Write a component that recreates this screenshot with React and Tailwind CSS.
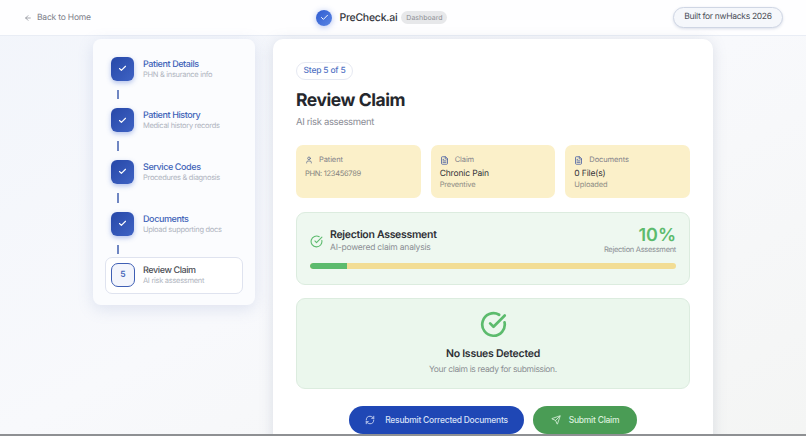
import React from "react";
import { ArrowLeft, Check, CircleCheckBig, FileText, RefreshCw, Send, User } from "lucide-react";

const steps = [
  { title: "Patient Details", sub: "PHN & insurance info" },
  { title: "Patient History", sub: "Medical history records" },
  { title: "Service Codes", sub: "Procedures & diagnosis" },
  { title: "Documents", sub: "Upload supporting docs" },
];

function DoneStep({ step }) {
  return (
    <>
      <div className="flex h-[37px] items-center gap-[9px] px-[6px]">
        <div className="flex h-[24px] w-[23px] shrink-0 items-center justify-center rounded-[6px] bg-gradient-to-br from-[#2748a8] to-[#3f63c4] shadow-[0_2px_5px_rgba(50,90,200,0.35)]">
          <Check className="h-[9px] w-[9px] text-white" strokeWidth={3} />
        </div>
        <div className="min-w-0 pt-[1px]">
          <div className="text-[9px] leading-[11px] font-medium tracking-[-0.4px] text-[#4163b8]">{step.title}</div>
          <div className="text-[7.5px] leading-[10px] tracking-[-0.3px] whitespace-nowrap text-[#b0b5c0]">{step.sub}</div>
        </div>
      </div>
      <div className="my-[2.5px] ml-[12px] h-[9.7px] w-[1.5px] bg-[#6f86c2]" />
    </>
  );
}

function InfoCard({ icon, label, title, sub, phn }) {
  return (
    <div className="h-[53px] flex-1 rounded-[7px] bg-[#fbf0c9] px-[9px] pt-[10px]">
      <div className="flex items-center gap-[6px] text-[7.5px] leading-[10px] tracking-[-0.1px] text-[#83828a]">
        {icon}
        {label}
      </div>
      {phn ? (
        <div className="mt-[4px] text-[7.5px] leading-[10px] tracking-[-0.3px] text-[#85847f]">{phn}</div>
      ) : (
        <>
          <div className="mt-[3px] text-[8.5px] leading-[12px] font-normal tracking-[-0.15px] text-[#34343a]">{title}</div>
          <div className="text-[7.5px] leading-[10px] tracking-[-0.15px] text-[#8f8e86]">{sub}</div>
        </>
      )}
    </div>
  );
}

export default function App() {
  return (
    <div className="relative flex h-[436px] w-[806px] flex-col overflow-hidden bg-gradient-to-br from-[#f2f5fb] via-[#f8f9fc] to-[#f4f5f4] font-['Inter','Liberation_Sans',sans-serif] [text-rendering:geometricPrecision]">
      {/* top bar */}
      <header className="flex h-[36px] shrink-0 items-center justify-between border-b border-[#e9edf5] bg-white/90 pr-[23px] pl-[24px]">
        <div className="flex items-center gap-[5px] pt-[1px] text-[8.5px] tracking-[-0.2px] text-[#7d808a]">
          <ArrowLeft className="h-[8px] w-[8px]" />
          Back to Home
        </div>
        <div className="flex items-center gap-[7px]">
          <div className="flex h-[16px] w-[16px] items-center justify-center rounded-full bg-gradient-to-br from-[#2f5bd0] to-[#5a85e4] shadow-[0_1px_6px_rgba(60,100,220,0.4)]">
            <Check className="h-[9px] w-[9px] text-white" strokeWidth={2.5} />
          </div>
          <div className="text-[10.5px] font-medium tracking-[-0.25px] text-[#33353c]">PreCheck.ai</div>
          <div className="-ml-[3px] rounded-full bg-[#e7e8ea] px-[5px] py-[2px] text-[7px] leading-[9px] text-[#8d8f94]">Dashboard</div>
        </div>
        <div className="flex h-[21px] w-[110px] items-center justify-center rounded-full border border-[#cfd6e4] bg-[#f5f7fb] text-[8.5px] tracking-[-0.3px] text-[#4c4f59] shadow-[0_1px_3px_rgba(80,100,150,0.2)]">
          Built for nwHacks 2026
        </div>
      </header>

      <div className="flex flex-1 justify-center gap-[18px] pt-[3px]">
        {/* steps */}
        <aside className="h-[266px] w-[162px] shrink-0 rounded-[8px] bg-[#fbfcfe] px-[12px] pt-[11px] shadow-[0_4px_16px_rgba(120,140,190,0.2)]">
          {steps.map((step) => (
            <DoneStep key={step.title} step={step} />
          ))}
          <div className="flex h-[37px] items-center gap-[8px] rounded-[7px] border border-[#dfe3ef] bg-white px-[5px]">
            <div className="flex h-[24px] w-[24px] shrink-0 items-center justify-center rounded-[7px] border-[1.5px] border-[#3f5fb4] bg-[#f3f5fc] text-[8.5px] font-semibold text-[#4566b8]">
              5
            </div>
            <div className="pt-[1px]">
              <div className="text-[9px] leading-[11px] font-medium tracking-[-0.4px] text-[#4b4d55]">Review Claim</div>
              <div className="text-[7.5px] leading-[10px] tracking-[-0.3px] text-[#b0b5c0]">AI risk assessment</div>
            </div>
          </div>
        </aside>

        {/* main card */}
        <main className="h-[420px] w-[440px] shrink-0 rounded-[10px] bg-white px-[23px] pt-[23px] shadow-[0_2px_14px_rgba(120,130,160,0.22)]">
          <div className="flex h-[18px] w-[57px] items-center justify-center rounded-full border border-[#e6e9f2] text-[8.5px] font-medium tracking-[-0.2px] text-[#5273c4]">
            Step 5 of 5
          </div>
          <h1 className="mt-[10px] text-[17.5px] leading-[22px] font-bold tracking-[-0.45px] text-[#25272d]">Review Claim</h1>
          <p className="mt-[4px] text-[9.5px] leading-[13px] tracking-[-0.35px] text-[#8b8d95]">AI risk assessment</p>

          <div className="mt-[16px] flex gap-[10px]">
            <InfoCard icon={<User className="h-[8px] w-[8px] text-[#4c5f8c]" />} label="Patient" phn="PHN: 123456789" />
            <InfoCard icon={<FileText className="h-[9px] w-[9px] text-[#3d55a0]" />} label="Claim" title="Chronic Pain" sub="Preventive" />
            <InfoCard icon={<FileText className="h-[9px] w-[9px] text-[#3d55a0]" />} label="Documents" title="0 File(s)" sub="Uploaded" />
          </div>

          <section className="mt-[14px] h-[73px] rounded-[9px] border border-[#dcecdf] bg-[#eef8f0] px-[13px] pt-[15px]">
            <div className="flex items-start justify-between">
              <div className="flex items-center gap-[7px]">
                <CircleCheckBig className="h-[13px] w-[13px] text-[#5cbb6d]" />
                <div>
                  <div className="text-[10.5px] leading-[14px] font-semibold tracking-[-0.3px] text-[#2e3036]">Rejection Assessment</div>
                  <div className="text-[8.5px] leading-[13px] tracking-[-0.2px] text-[#8b8f94]">AI-powered claim analysis</div>
                </div>
              </div>
              <div className="-mt-[1px] text-right">
                <div className="text-[18px] leading-[17px] font-semibold text-[#5cbb6d]">10%</div>
                <div className="text-[7.5px] leading-[12px] tracking-[-0.3px] text-[#8b8f94]">Rejection Assessment</div>
              </div>
            </div>
            <div className="mt-[7px] h-[6px] overflow-hidden rounded-full bg-[#f2dd94]">
              <div className="h-full w-[10%] rounded-l-full bg-[#5cbb6d]" />
            </div>
          </section>

          <section className="mt-[13px] flex h-[91px] flex-col items-center rounded-[9px] border border-[#dcecdf] bg-[#ebf7ed] pt-[12px]">
            <CircleCheckBig className="h-[27px] w-[27px] text-[#5cbb6d]" strokeWidth={2.4} />
            <div className="mt-[9px] text-[10.5px] leading-[14px] font-semibold tracking-[-0.25px] text-[#2e3036]">No Issues Detected</div>
            <div className="mt-[4px] text-[8.5px] leading-[11px] tracking-[-0.35px] text-[#8b8f94]">Your claim is ready for submission.</div>
          </section>

          <div className="mt-[17px] flex justify-center gap-[9px]">
            <button className="flex h-[28px] w-[175px] items-center justify-center gap-[10px] rounded-full bg-[#1f47b5] text-[8.5px] font-medium tracking-[-0.25px] text-[#d7e0f7]">
              <RefreshCw className="h-[10px] w-[10px]" />
              Resubmit Corrected Documents
            </button>
            <button className="flex h-[28px] w-[104px] items-center justify-center gap-[8px] rounded-full bg-[#4a9c55] text-[8.5px] font-medium tracking-[-0.25px] text-[#d9f0dc]">
              <Send className="h-[10px] w-[10px]" />
              Submit Claim
            </button>
          </div>
        </main>
      </div>
      <div className="absolute right-0 bottom-0 left-0 h-[2px] bg-[#8e9093]" />
    </div>
  );
}
